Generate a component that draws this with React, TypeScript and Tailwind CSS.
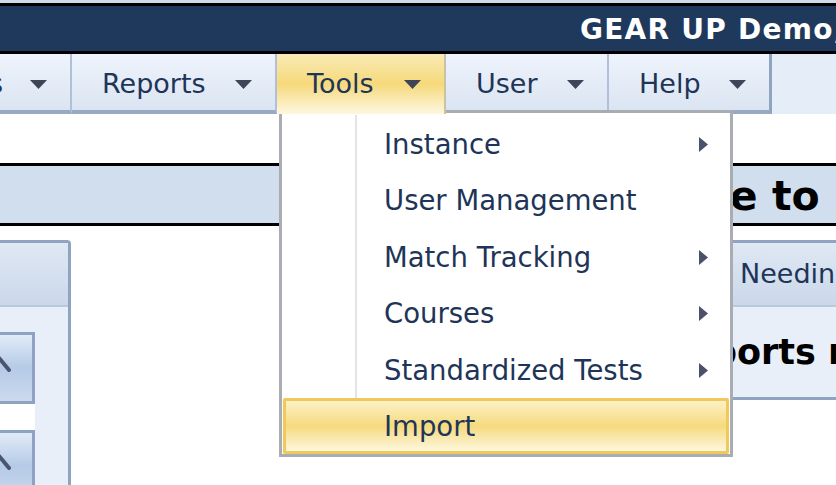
import React from "react";

function DownArrow() {
  return (
    <svg width="17" height="9" viewBox="0 0 17 9" className="shrink-0">
      <polygon points="0,0 17,0 8.5,9" fill="#3e4559" />
    </svg>
  );
}

function RightArrow() {
  return (
    <svg width="9" height="15" viewBox="0 0 9 15" className="shrink-0">
      <polygon points="0,0 9,7.5 0,15" fill="#4a5168" />
    </svg>
  );
}

function BarItem({ label, width, active, last }: { label: string; width: string; active?: boolean; last?: boolean }) {
  const base = "flex items-center h-[60px] pl-[30px] pr-[23px] pt-[5px] shrink-0 text-[27px] text-[#1e3558]";
  if (active) {
    return (
      <div className={`${base} ${width} pb-[4px] relative z-20 border-r-2 border-[#c9c3a3] bg-linear-to-b from-[#f9ebb5] via-[#f6d97a] to-[#fdf7de]`}>
        <span>{label}</span>
        <span className="ml-auto">
          <DownArrow />
        </span>
      </div>
    );
  }
  return (
    <div
      className={`${base} ${width} border-b-4 border-b-[#98a9c3] ${
        last ? "border-r-[3px] border-r-[#8fa4c0]" : "border-r-2 border-r-[#afc0d8]"
      } bg-linear-to-b from-[#eef4fc] to-[#dbe4f2]`}
    >
      <span>{label}</span>
      <span className="ml-auto">
        <DownArrow />
      </span>
    </div>
  );
}

function MenuRow({ label, sub, active }: { label: string; sub?: boolean; active?: boolean }) {
  if (active) {
    return (
      <div className="flex items-center h-[56.5px] border-[3px] border-[#f0c85c] rounded-[2px] bg-linear-to-b from-[#fcf1c6] via-[#f6da7c] to-[#fdf7dd] pl-[98px] pt-[2px]">
        <span>{label}</span>
      </div>
    );
  }
  return (
    <div className="flex items-stretch h-[56.5px]">
      <div className="w-[74px] shrink-0 border-r-2 border-[#e1e4e9]" />
      <div className="flex flex-1 items-center pl-[27px] pr-[21px] pt-[2px]">
        <span>{label}</span>
        {sub && (
          <span className="ml-auto">
            <RightArrow />
          </span>
        )}
      </div>
    </div>
  );
}

function Chevron() {
  return (
    <svg width="14" height="20" viewBox="0 0 14 20" className="absolute left-0 top-[20px]" overflow="visible">
      <line x1="-1" y1="3" x2="9" y2="15" stroke="#4a5571" strokeWidth="4" strokeLinecap="round" />
    </svg>
  );
}

function SideButton() {
  return (
    <div className="relative h-[72px] border-y-[3px] border-r-[3px] border-[#8ea3c1] bg-linear-to-b from-[#e2ebf7] via-[#b5cae6] to-[#cbdaef]">
      <Chevron />
    </div>
  );
}

export default function App() {
  return (
    <div className="relative w-[836px] h-[485px] overflow-hidden bg-white font-['DejaVu_Sans',Verdana,sans-serif]">
      <div className="h-[3px] bg-[#d2dbe8]" />
      <div className="h-[51px] border-y-[3px] border-black bg-[#1f395c] flex items-center pl-[580px] pt-[2px] whitespace-nowrap overflow-hidden">
        <span className="text-white font-bold text-[28px] tracking-[1.25px]">GEAR UP Demo,</span>
      </div>

      <nav className="flex h-[60px] bg-[#e5edf8]">
        <div className="flex items-center justify-end h-[60px] w-[72px] shrink-0 overflow-hidden whitespace-nowrap pr-[23px] pt-[5px] text-[27px] text-[#1e3558] border-b-4 border-b-[#98a9c3] border-r-2 border-r-[#afc0d8] bg-linear-to-b from-[#eef4fc] to-[#dbe4f2]">
          <span className="shrink-0">Students</span>
          <span className="ml-[27px] shrink-0">
            <DownArrow />
          </span>
        </div>
        <BarItem label="Reports" width="w-[205px]" />
        <BarItem label="Tools" width="w-[169px]" active />
        <BarItem label="User" width="w-[163px]" />
        <BarItem label="Help" width="w-[163px]" last />
      </nav>

      <div className="h-[49px]" />

      <div className="h-[63px] border-y-[3px] border-black bg-[#d0deee] flex items-center pl-[549px] pt-[4px] whitespace-nowrap overflow-hidden">
        <span className="font-bold text-[41px] text-black">Welcome to</span>
      </div>

      <div className="h-[14px]" />

      <div className="flex justify-between">
        <div className="w-[71px] h-[260px] border-t-[3px] border-r-[3px] border-[#8fa4c0] rounded-tr-[4px] bg-[#e8eff9] flex flex-col">
          <div className="h-[64px] shrink-0 border-b-2 border-[#b9c9dd] bg-linear-to-b from-[#dfe8f4] to-[#cbd8ea] rounded-tr-[2px]" />
          <div className="w-[35px] mt-[25px] flex flex-col">
            <SideButton />
            <div className="h-[26px] bg-white" />
            <SideButton />
          </div>
        </div>

        <div className="w-[108px] h-[160px] border-t-[3px] border-b-[3px] border-[#8fa4c0] bg-[#e8eff9] flex flex-col whitespace-nowrap overflow-hidden">
          <div className="h-[64px] shrink-0 border-b-2 border-[#b9c9dd] bg-linear-to-b from-[#dfe8f4] to-[#cbd8ea] flex items-center pl-[12px] text-[27px] text-[#1e3558]">
            <span>Needing Attention</span>
          </div>
          <div className="flex-1 flex items-center font-bold text-[35px] text-black">
            <span className="-ml-[57px]">reports need attention</span>
          </div>
        </div>
      </div>

      <div className="absolute left-[279px] top-[110px] z-10 w-[454px] h-[347px] border-[3px] border-[#a9acb1] bg-white px-[1px] pt-[2px] text-[27.5px] text-[#1e3558] whitespace-nowrap">
        <MenuRow label="Instance" sub />
        <MenuRow label="User Management" />
        <MenuRow label="Match Tracking" sub />
        <MenuRow label="Courses" sub />
        <MenuRow label="Standardized Tests" sub />
        <MenuRow label="Import" active />
      </div>
    </div>
  );
}
